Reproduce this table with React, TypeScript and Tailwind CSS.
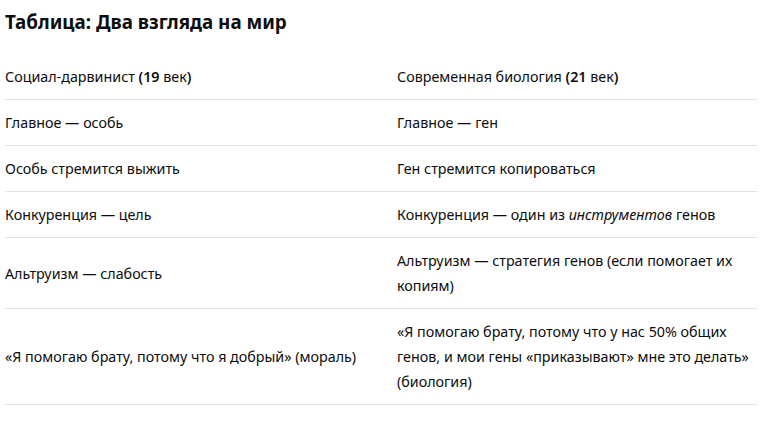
const rows: [React.ReactNode, React.ReactNode][] = [
  [
    <>
      Социал-дарвинист <b className="font-semibold">(19</b> век<b className="font-semibold">)</b>
    </>,
    <>
      Современная биология <b className="font-semibold">(21</b> век<b className="font-semibold">)</b>
    </>,
  ],
  ["Главное — особь", "Главное — ген"],
  ["Особь стремится выжить", "Ген стремится копироваться"],
  [
    "Конкуренция — цель",
    <>
      Конкуренция — один из <em>инструментов</em> генов
    </>,
  ],
  ["Альтруизм — слабость", "Альтруизм — стратегия генов (если помогает их копиям)"],
  [
    "«Я помогаю брату, потому что я добрый» (мораль)",
    "«Я помогаю брату, потому что у нас 50% общих генов, и мои гены «приказывают» мне это делать» (биология)",
  ],
];

export default function App() {
  return (
    <div className="min-h-[435px] w-[778px] bg-white px-[5px] pt-[10px] text-[#0d0d0d] font-['Noto_Sans','Open_Sans',sans-serif]">
      <h2 className="text-[18.8px] font-bold leading-[24px]">Таблица: Два взгляда на мир</h2>
      <div className="mt-[20px] w-[752px]">
        {rows.map(([left, right], i) => (
          <div
            key={i}
            className="grid grid-cols-[392px_1fr] items-center border-b border-[#e3e3e3] text-[14.3px] leading-[25px]"
          >
            <div className="py-[10px] pr-4">{left}</div>
            <div className="py-[10px] pr-[4px]">{right}</div>
          </div>
        ))}
      </div>
    </div>
  );
}
